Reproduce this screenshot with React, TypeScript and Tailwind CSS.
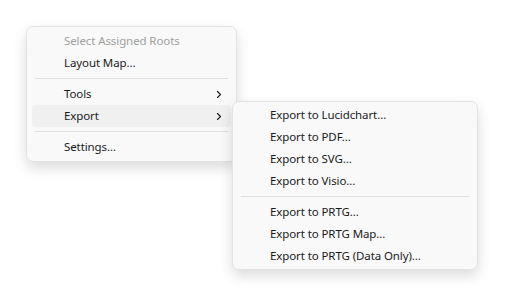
import React from 'react';

const Chevron = () => (
    <svg width="8" height="9" viewBox="0 0 8 9" className="text-[#1a1a1a]">
        <path d="M2.5 1.5 L5.5 4.5 L2.5 7.5" fill="none" stroke="currentColor" strokeWidth="1.1" strokeLinecap="round" strokeLinejoin="round" />
    </svg>
);

const Item = ({ label, disabled, sub, active }: { label: string; disabled?: boolean; sub?: boolean; active?: boolean }) => (
    <div className={`mx-[5px] h-[22px] flex items-center justify-between pl-[32px] pr-[8px] rounded-[4px] ${active ? 'bg-[#f0f0f0]' : ''}`}>
        <span className={disabled ? 'text-[#a0a0a0]' : 'text-[#1a1a1a]'}>{label}</span>
        {sub && <Chevron />}
    </div>
);

const Sep = () => (
    <div className="h-[9px] flex items-center px-[8px]">
        <div className="h-px w-full bg-[#e0e0e0]" />
    </div>
);

const SubItem = ({ label }: { label: string }) => (
    <div className="mx-[5px] h-[22px] flex items-center pl-[32px] text-[#1a1a1a]">{label}</div>
);

const App = () => {
    return (
        <div className="w-[505px] h-[293px] bg-white text-[11.5px] tracking-[-0.1px] leading-none" style={{ fontFamily: '"Noto Sans", "Open Sans", sans-serif' }}>
            <div className="relative pt-[26px] pl-[26px]">
                <div className="w-[211px] py-[3px] bg-[#f9f9f9] border border-[#e3e3e3] rounded-[7px] shadow-[0_6px_14px_rgba(0,0,0,0.14)]">
                    <Item label="Select Assigned Roots" disabled />
                    <Item label="Layout Map..." />
                    <Sep />
                    <Item label="Tools" sub />
                    <Item label="Export" sub active />
                    <Sep />
                    <Item label="Settings..." />
                </div>
                <div className="absolute left-[232px] top-[101px] w-[246px] py-[2px] bg-[#f9f9f9] border border-[#e3e3e3] rounded-[7px] shadow-[0_6px_14px_rgba(0,0,0,0.14)]">
                    <SubItem label="Export to Lucidchart..." />
                    <SubItem label="Export to PDF..." />
                    <SubItem label="Export to SVG..." />
                    <SubItem label="Export to Visio..." />
                    <Sep />
                    <SubItem label="Export to PRTG..." />
                    <SubItem label="Export to PRTG Map..." />
                    <SubItem label="Export to PRTG (Data Only)..." />
                </div>
            </div>
        </div>
    );
};

export default App;
